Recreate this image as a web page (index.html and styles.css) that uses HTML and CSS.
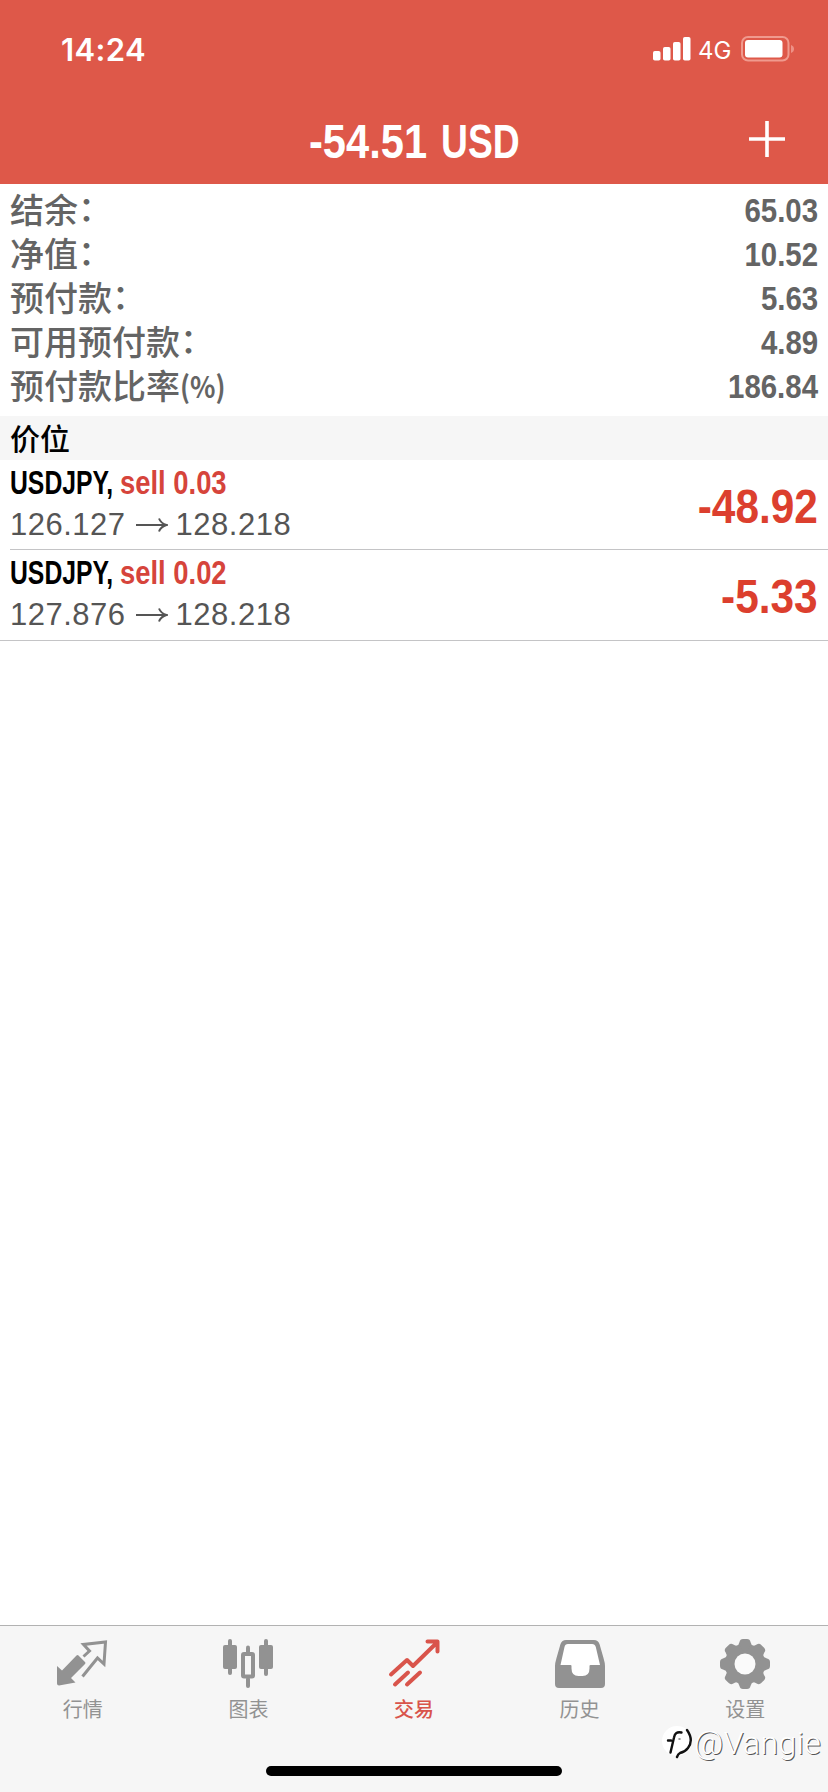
FILE: index.html
```
<!DOCTYPE html>
<html lang="zh-CN">
<head>
    <meta charset="UTF-8">
    <meta name="viewport" content="width=device-width, initial-scale=1.0">
    <title>交易</title>
    <link rel="stylesheet" href="styles.css">
</head>
<body>
    <header>
        <div class="status-bar">
            <span class="time">14:24</span>
            <div class="status-right">
                <svg class="signal" width="38" height="24" viewBox="0 0 38 24" fill="#fff">
                    <rect x="0" y="14" width="7.5" height="9.5" rx="1.8"/>
                    <rect x="10" y="10" width="7.5" height="13.5" rx="1.8"/>
                    <rect x="20" y="5" width="7.5" height="18.5" rx="1.8"/>
                    <rect x="30" y="0" width="7.5" height="23.5" rx="1.8"/>
                </svg>
                <span class="network">4G</span>
                <svg class="battery" width="54" height="26" viewBox="0 0 54 26">
                    <rect x="1" y="1" width="46.5" height="23.5" rx="6" fill="none" stroke="#f09a8e" stroke-width="2"/>
                    <rect x="4" y="4" width="37.5" height="17.5" rx="3" fill="#fff"/>
                    <path d="M50 9v8q3-1.200 3-4t-3-4z" fill="#ee9186"/>
                </svg>
            </div>
        </div>
        <div class="title-bar">
            <h1><span class="total">-54.51</span><span class="currency">USD</span></h1>
            <svg class="add" width="36" height="36" viewBox="0 0 36 36" stroke="#fff" stroke-width="3.6">
                <path d="M0 18h36M18 0v36"/>
            </svg>
        </div>
    </header>

    <main>
        <!-- account summary -->
        <div class="summary">
            <div class="row"><span>结余<i>：</i></span><b>65.03</b></div>
            <div class="row"><span>净值<i>：</i></span><b>10.52</b></div>
            <div class="row"><span>预付款<i>：</i></span><b>5.63</b></div>
            <div class="row"><span>可用预付款<i>：</i></span><b>4.89</b></div>
            <div class="row"><span>预付款比率<em>(%)</em></span><b>186.84</b></div>
        </div>

        <h2>价位</h2>

        <!-- open positions -->
        <div class="position">
            <div class="info">
                <div class="order"><span class="symbol">USDJPY,</span><span class="side">sell 0.03</span></div>
                <div class="prices">
                    <span>126.127</span>
                    <svg width="32" height="16" viewBox="0 0 32 16" fill="none" stroke="#555" stroke-width="2"><path d="M0 8h30M23 1.500q2 5 7.500 6.500-5.500 1.500-7.500 6.500"/></svg>
                    <span>128.218</span>
                </div>
            </div>
            <span class="profit">-48.92</span>
        </div>
        <div class="position last">
            <div class="info">
                <div class="order"><span class="symbol">USDJPY,</span><span class="side">sell 0.02</span></div>
                <div class="prices">
                    <span>127.876</span>
                    <svg width="32" height="16" viewBox="0 0 32 16" fill="none" stroke="#555" stroke-width="2"><path d="M0 8h30M23 1.500q2 5 7.500 6.500-5.500 1.500-7.500 6.500"/></svg>
                    <span>128.218</span>
                </div>
            </div>
            <span class="profit">-5.33</span>
        </div>
    </main>

    <nav>
        <a class="tab">
            <svg width="52" height="52" viewBox="1 0 52 52">
                <path d="M1 28l5 4.500L20.500 17.500q1-1 2 0l6.500 6.500q1 1 0 2L15 40l4.500 4.500L3 47.500q-2 0-2-2z" fill="#929292"/>
                <path d="M27.500 18.500l6-5.500L27.500 6.500l22-2.500-1.500 22-6.500-6L26.500 38.500" fill="none" stroke="#929292" stroke-width="3"/>
            </svg>
            <span>行情</span>
        </a>
        <a class="tab">
            <svg width="52" height="52" viewBox="0 0 52 52" fill="#929292">
                <rect x="1" y="7" width="14" height="24" rx="2"/>
                <rect x="6" y="1" width="4" height="36" rx="2"/>
                <rect x="37" y="7" width="14" height="24" rx="2"/>
                <rect x="42" y="1" width="4" height="37" rx="2"/>
                <rect x="24" y="7.500" width="4" height="9" rx="2"/>
                <rect x="24" y="39" width="4" height="11" rx="2"/>
                <rect x="21" y="16" width="10" height="22.500" rx="1" fill="none" stroke="#929292" stroke-width="4"/>
            </svg>
            <span>图表</span>
        </a>
        <a class="tab active">
            <svg width="52" height="52" viewBox="0 0 52 52" fill="none" stroke="#d9544b" stroke-width="4" stroke-linecap="round" stroke-linejoin="round">
                <path d="M3 36.500L19 22l6 6L48.500 5M39.500 3.500h10v10M7 46.500L20 34.500M19 46.500l13-12"/>
            </svg>
            <span>交易</span>
        </a>
        <a class="tab">
            <svg width="52" height="52" viewBox="0 0 52 52">
                <path d="M12 2h28q4 0 5.500 4l4 14q1.500 5 1.500 8v18q0 4-4 4H5q-4 0-4-4V28q0-3 1.500-8l4-14Q8 2 12 2z" fill="#929292"/>
                <path d="M14 6h24q3 0 3.800 3L46 27H36.500q-1 0-1 1v2.500q0 7.500-7 7.500h-4q-7 0-7-7.500V28q0-1-1-1H6.500l4-18Q11 6 14 6z" fill="#fff"/>
            </svg>
            <span>历史</span>
        </a>
        <a class="tab">
            <svg width="52" height="52" viewBox="-26 -26 52 52">
                <g fill="#929292">
                    <circle r="20"/>
                    <g id="teeth">
                        <path id="tooth" d="M-9-17Q-6-19-5.500-22-5-25-2-25H2Q5-25 5.500-22 6-19 9-17L6 0H-6z"/>
                        <use href="#tooth" transform="rotate(90)"/>
                        <use href="#tooth" transform="rotate(180)"/>
                        <use href="#tooth" transform="rotate(270)"/>
                    </g>
                    <use href="#teeth" transform="rotate(45)"/>
                </g>
                <circle r="10.500" fill="#fafafa"/>
            </svg>
            <span>设置</span>
        </a>
        <div class="home-indicator"></div>
    </nav>

    <div class="watermark">
        <svg width="34" height="36" viewBox="0 0 34 36" fill="none" stroke-linecap="round">
            <circle cx="17" cy="16" r="15" fill="#fff"/>
            <path d="M21.500 7.500q-6.500-1.500-7.500 5l-3.500 15M8 15.500h3" stroke="#111" stroke-width="2.400"/>
            <path d="M27 5q7 10 1 18-3 4-8 5-2 1-3 4" stroke="#111" stroke-width="2.400"/>
            <path d="M19 14h1" stroke="#777" stroke-width="1.500"/>
        </svg>
        <span>@Vangie</span>
    </div>
</body>
</html>
```

FILE: styles.css
```
* {
    box-sizing: border-box;
}

body {
    margin: 0;
    height: 1792px;
    display: flex;
    flex-direction: column;
    background-color: #fff;
    font-family: "Liberation Sans", "Noto Sans CJK SC", sans-serif;
    overflow: hidden;
}

header {
    height: 184px;
    background-color: #de5849;
    color: #fff;
}

.status-bar {
    height: 98px;
    padding: 0 33px 0 61px;
    display: flex;
    justify-content: space-between;
    align-items: center;
}

.time {
    padding-top: 1px;
    font-family: Inter, sans-serif;
    font-size: 31px;
    font-weight: 600;
    letter-spacing: 0.4px;
}

.status-right {
    display: flex;
    align-items: center;
}

.network {
    width: 50px;
    padding-top: 3px;
    padding-left: 7px;
    font-family: Inter, sans-serif;
    font-size: 24px;
    line-height: 24px;
}

.title-bar {
    height: 86px;
    padding: 0 43px 0 309px;
    display: flex;
    justify-content: space-between;
}

h1 {
    margin: 0;
    display: flex;
    font-size: 49px;
    line-height: 87px;
}

/* condensed headings */
.total,
.currency,
.symbol,
.side {
    display: inline-block;
    transform-origin: left;
    white-space: nowrap;
}

.total {
    width: 132px;
    transform: scaleX(0.85);
}

.currency {
    transform: scaleX(0.76);
}

.add {
    margin-top: 23px;
}

main {
    flex: 1;
}

.summary {
    height: 232px;
    padding: 4px 10px 0 10px;
    color: #646464;
}

.row {
    height: 44px;
    display: flex;
    justify-content: space-between;
    font-size: 34px;
    line-height: 44px;
}

.row span {
    font-family: "Noto Sans CJK SC", sans-serif;
    font-weight: 500;
    line-height: 42px;
}

.row i {
    position: relative;
    top: -2px;
    font-style: normal;
}

.row em {
    display: inline-block;
    position: relative;
    top: -1px;
    font-size: 30px;
    font-style: normal;
    font-weight: 700;
    transform: scaleX(0.88);
    transform-origin: left;
}

.row b {
    transform: scaleX(0.865);
    transform-origin: right;
    line-height: 45px;
}

h2 {
    margin: 0;
    height: 44px;
    padding-left: 10px;
    background-color: #f6f6f6;
    color: #000;
    font-family: "Noto Sans CJK SC", sans-serif;
    font-size: 30px;
    font-weight: 500;
    line-height: 42px;
}

.position {
    height: 90px;
    margin-left: 10px;
    padding-right: 10px;
    display: flex;
    justify-content: space-between;
    border-bottom: 1px solid #c4c4c6;
}

.position.last {
    height: 91px;
    margin-left: 0;
    padding-left: 10px;
}

.order {
    height: 44px;
    display: flex;
    font-size: 33px;
    font-weight: bold;
    line-height: 46px;
}

.symbol {
    width: 110px;
    transform: scaleX(0.75);
}

.side {
    color: #d6443b;
    transform: scaleX(0.83);
}

.prices {
    display: flex;
    align-items: center;
    color: #555;
    font-size: 31px;
    letter-spacing: 0.5px;
    line-height: 41px;
}

.prices svg {
    margin: 0 8px 0 10px;
}

.profit {
    color: #dc3f2e;
    font-size: 49px;
    font-weight: bold;
    line-height: 92px;
    transform: scaleX(0.865);
    transform-origin: right;
}

nav {
    height: 167px;
    display: grid;
    grid-template-columns: repeat(5, 1fr);
    grid-template-rows: 139px 10px;
    border-top: 1px solid #b2b2b2;
    background-color: #f6f6f6;
}

.tab {
    padding-top: 12px;
    display: flex;
    flex-direction: column;
    align-items: center;
    color: #929292;
    font-family: "Noto Sans CJK SC", sans-serif;
    font-size: 20px;
    line-height: 37px;
}

.tab.active {
    color: #d9544b;
    font-weight: 500;
}

.home-indicator {
    grid-column: 1 / -1;
    justify-self: center;
    width: 296px;
    height: 10px;
    margin-top: 1px;
    border-radius: 5px;
    background-color: #000;
}

.watermark {
    position: absolute;
    left: 660px;
    bottom: 29px;
    display: flex;
    align-items: center;
    color: #fff;
    font-family: Roboto, sans-serif;
    font-size: 32px;
    font-weight: 300;
    letter-spacing: 0.4px;
    line-height: 40px;
    text-shadow: 1px 1px 0 #555;
}
```
